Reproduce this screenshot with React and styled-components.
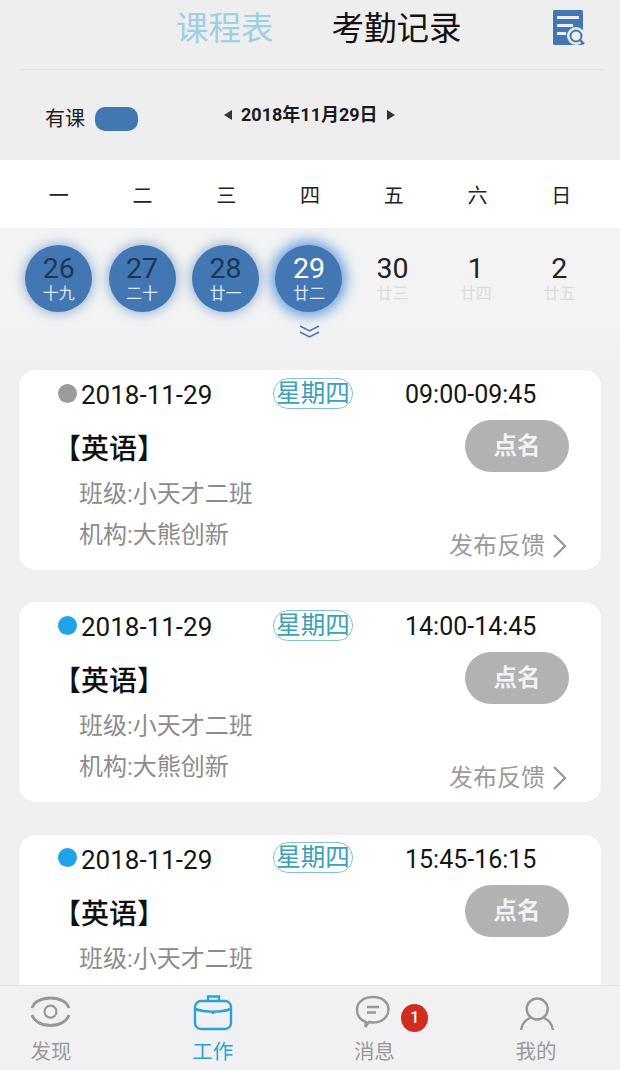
import React from "react";
import styled, { createGlobalStyle } from "styled-components";

const Global = createGlobalStyle`
  html, body { margin: 0; padding: 0; background: #f0f0f2; }
  body { font-family: Roboto, "Noto Sans CJK SC", sans-serif; }
  * { box-sizing: border-box; }
`;
const Page = styled.div`
  width: 620px; height: 1070px; overflow: hidden; position: relative;
  display: flex; flex-direction: column; background: #f0f0f2;
`;
const HeaderBand = styled.div`
  flex: none; background: #eeeeef; padding: 0 16px 0 20px;
`;
const Header = styled.header`
  height: 70px; border-bottom: 1px solid #e4e4e5;
  display: flex; align-items: center; position: relative; padding: 0 0 12px 156px;
`;
const Tab = styled.div`
  font-size: 32.5px; line-height: 40px; font-weight: 400;
  color: ${p => (p.$active ? "#111" : "#9dd0e4")};
  margin-right: 58px; white-space: nowrap;
`;
const ReportIcon = styled.svg`
  position: absolute; left: 531px; top: 8px; width: 36px; height: 38px;
`;
const SubRow = styled.div`
  height: 90px; flex: none; display: flex; align-items: flex-start; padding: 0 0 0 45px;
  background: #eeeeef;
`;
const Legend = styled.div`
  display: flex; align-items: center; gap: 10px; margin-top: 37px;
  font-size: 20px; line-height: 24px; color: #222; width: 179px;
`;
const LegendPill = styled.span`
  width: 43px; height: 24px; border-radius: 10px; background: #4377b4; display: block;
`;
const DateNav = styled.div`
  display: flex; align-items: center; gap: 9px; margin-top: 33px;
  font-size: 18px; line-height: 24px; font-weight: 700; color: #1a1a1a;
`;
const Caret = styled.span`
  width: 0; height: 0; border-top: 5px solid transparent; border-bottom: 5px solid transparent;
  ${p => (p.$left ? "border-right: 8px solid #333;" : "border-left: 8px solid #333;")}
`;
const WeekRow = styled.div`
  height: 68px; flex: none; background: #fff; display: grid;
  grid-template-columns: repeat(7, 1fr); padding: 4px 17px 0; align-items: center;
`;
const WeekDay = styled.div`
  text-align: center; font-size: 20px; line-height: 28px; color: #222;
`;
const DayRow = styled.div`
  flex: none; height: 142px; display: grid; grid-template-columns: repeat(7, 1fr);
  padding: 17px 19px 0 17px; position: relative; align-items: start;
  background: linear-gradient(#f3f3f4, #f3f3f4 60%, #f0f0f2);
`;
const DayCell = styled.div`
  justify-self: center; width: 67px; height: 67px; border-radius: 50%;
  display: flex; flex-direction: column; align-items: center; padding-top: 8px;
  ${p => p.$on && `background: #4377b4; box-shadow: 0 0 ${p.$today ? "13px 4px rgba(66,133,214,.8)" : "11px 2px rgba(67,119,180,.5)"};`}
`;
const DayNum = styled.div`
  font-size: 28.5px; line-height: 32px;
  color: ${p => (p.$today ? "#fff" : p.$on ? "#1f3554" : "#222")};
`;
const Lunar = styled.div`
  font-size: 16px; line-height: 18px;
  color: ${p => (p.$on ? "#dfe8f3" : "#dcdcdc")};
`;
const Chevrons = styled.svg`
  position: absolute; left: 298px; top: 96px; width: 23px; height: 16px;
`;
const List = styled.div`
  flex: 1; min-height: 0; overflow: hidden; padding: 0 19px;
  display: flex; flex-direction: column; gap: 32.3px;
`;
const Card = styled.article`
  flex: none; height: 200px; border-radius: 16px; background: #fff; position: relative;
  padding: 8px 0 0 39px; box-shadow: 0 0 3px rgba(0,0,0,.04);
`;
const TopLine = styled.div`
  display: flex; align-items: center; height: 34px;
`;
const Dot = styled.span`
  width: 19px; height: 19px; border-radius: 50%; margin: -4px 4px 0 0; flex: none;
  background: ${p => p.$color};
`;
const DateText = styled.span`
  font-size: 26px; line-height: 34px; color: #151515; width: 192px; flex: none;
`;
const WeekBadge = styled.span`
  width: 80px; height: 31px; border: 1px solid #82c5d0; border-radius: 15px; flex: none;
  display: flex; align-items: center; justify-content: center; white-space: nowrap;
  font-size: 24.5px; line-height: 29px; color: #3d9fb8; margin: -4px 52px 0 0;
`;
const TimeText = styled.span`
  font-size: 25px; line-height: 34px; color: #151515;
`;
const Title = styled.div`
  font-size: 28px; line-height: 38px; color: #111; margin: 19px 0 0 -5px; font-weight: 500; white-space: nowrap;
`;
const Meta = styled.div`
  font-size: 24px; line-height: 32px; color: #8c8c8c; margin: 9px 0 0 21px; white-space: nowrap;
`;
const CallButton = styled.button`
  position: absolute; left: 446px; top: 50px; width: 104px; height: 52px; border: 0; border-radius: 26px;
  background: #b2b2b2; color: #f2f2f2; font: 700 23.5px/28px Roboto, "Noto Sans CJK SC", sans-serif;
`;
const Feedback = styled.div`
  position: absolute; left: 430px; top: 159px; display: flex; align-items: center; gap: 7px;
  font-size: 24px; line-height: 34px; color: #9a9a9a; white-space: nowrap;
`;
const Arrow = styled.svg`
  width: 16px; height: 26px; flex: none;
`;
const TabBar = styled.nav`
  position: absolute; left: 0; right: 0; bottom: 0; height: 85px; background: #f1f1f3;
  border-top: 1px solid #e4e4e6; display: grid;
  grid-template-columns: repeat(4, 100px); column-gap: 61.7px; padding-left: 1px;
`;
const TabItem = styled.div`
  display: flex; flex-direction: column; align-items: center; position: relative;
  padding-top: 8px; color: ${p => (p.$active ? "#2ba3d2" : "#9a9a9a")};
  font-size: 20.5px; line-height: 26px;
`;
const TabIcon = styled.svg`
  width: 44px; height: 38px; flex: none; margin-bottom: 7px;
`;
const Badge = styled.span`
  position: absolute; left: 77px; top: 18px; width: 27px; height: 28px; border-radius: 50%;
  background: #cf2d20; color: #fff; font-size: 16px; line-height: 28px; text-align: center; font-weight: 500;
`;

const weekdays = ["一", "二", "三", "四", "五", "六", "日"];
const days = [
  ["26", "十九", 1], ["27", "二十", 1], ["28", "廿一", 1], ["29", "廿二", 2],
  ["30", "廿三", 0], ["1", "廿四", 0], ["2", "廿五", 0],
];
const cards = [
  { time: "09:00-09:45", dot: "#9b9b9b" },
  { time: "14:00-14:45", dot: "#1fa2ea" },
  { time: "15:45-16:15", dot: "#1fa2ea" },
];

export default function App() {
  return (
    <Page>
      <Global />
      <HeaderBand>
        <Header>
          <Tab>课程表</Tab>
          <Tab $active>考勤记录</Tab>
          <ReportIcon viewBox="0 0 36 38">
            <rect x="2" y="2" width="30" height="35" rx="1.5" fill="#4377b4" />
            <rect x="6" y="8" width="22" height="3" fill="#e8eef6" />
            <rect x="6" y="16" width="16" height="3" fill="#e8eef6" />
            <rect x="6" y="24" width="9" height="3" fill="#e8eef6" />
            <circle cx="25" cy="28" r="9" fill="#eeeeef" />
            <circle cx="25" cy="28" r="5.5" fill="none" stroke="#4377b4" strokeWidth="2" />
            <path d="M29 32l4 4" stroke="#4377b4" strokeWidth="2.4" />
          </ReportIcon>
        </Header>
      </HeaderBand>
      <SubRow>
        <Legend>有课<LegendPill /></Legend>
        <DateNav><Caret $left />2018年11月29日<Caret /></DateNav>
      </SubRow>
      <WeekRow>
        {weekdays.map(d => <WeekDay key={d}>{d}</WeekDay>)}
      </WeekRow>
      <DayRow>
        {days.map(([n, l, s]) => (
          <DayCell key={n} $on={s > 0} $today={s === 2}>
            <DayNum $on={s > 0} $today={s === 2}>{n}</DayNum>
            <Lunar $on={s > 0}>{l}</Lunar>
          </DayCell>
        ))}
        <Chevrons viewBox="0 0 23 16" fill="none" stroke="#4377b4" strokeWidth="1.5">
          <path d="M2 2l9.5 5 9.5-5M2 8l9.5 5 9.5-5" />
        </Chevrons>
      </DayRow>
      <List>
        {cards.map(c => (
          <Card key={c.time}>
            <TopLine>
              <Dot $color={c.dot} />
              <DateText>2018-11-29</DateText>
              <WeekBadge>星期四</WeekBadge>
              <TimeText>{c.time}</TimeText>
            </TopLine>
            <Title>【英语】</Title>
            <Meta>班级:小天才二班</Meta>
            <Meta>机构:大熊创新</Meta>
            <CallButton>点名</CallButton>
            <Feedback>
              发布反馈
              <Arrow viewBox="0 0 16 26" fill="none" stroke="#9a9a9a" strokeWidth="2.4"><path d="M2 2l11 11L2 24" /></Arrow>
            </Feedback>
          </Card>
        ))}
      </List>
      <TabBar>
        <TabItem>
          <TabIcon viewBox="0 0 44 38" fill="none" stroke="#979797" strokeWidth="2.8">
            <path d="M3 14C5 8 12 4 21.500 4S38 8 40 14M3 21c2 6 9 10.500 18.500 10.500S38 27 40 21" />
            <circle cx="21.500" cy="17.700" r="6" strokeWidth="2.200" />
          </TabIcon>
          发现
        </TabItem>
        <TabItem $active>
          <TabIcon viewBox="0 0 44 38" fill="none" stroke="#2ba3d2" strokeWidth="2.400">
            <rect x="4" y="7" width="36" height="28" rx="6" />
            <path d="M17 7V2.500h11V7M4 15c10 3.500 26 3.500 36 0M22 17.500v2.500" />
          </TabIcon>
          工作
        </TabItem>
        <TabItem>
          <TabIcon viewBox="0 0 44 38" fill="none" stroke="#979797" strokeWidth="2.400">
            <path d="M14 28C8 26 5 21 5 15.500 5 8 12 3 21 3s15.500 5 15.500 12.500S30 28.500 21 28.500c-1.500 0-3-.2-4-.5L13.300 33z" />
            <path d="M15 13h12M15 18.500h9" />
          </TabIcon>
          消息
          <Badge>1</Badge>
        </TabItem>
        <TabItem>
          <TabIcon viewBox="0 0 44 38" fill="none" stroke="#979797" strokeWidth="2.400">
            <circle cx="23.200" cy="15" r="10.500" />
            <path d="M7 36c1-6 4-10 9-12M39 36c-1-6-4-10-9-12" />
          </TabIcon>
          我的
        </TabItem>
      </TabBar>
    </Page>
  );
}
